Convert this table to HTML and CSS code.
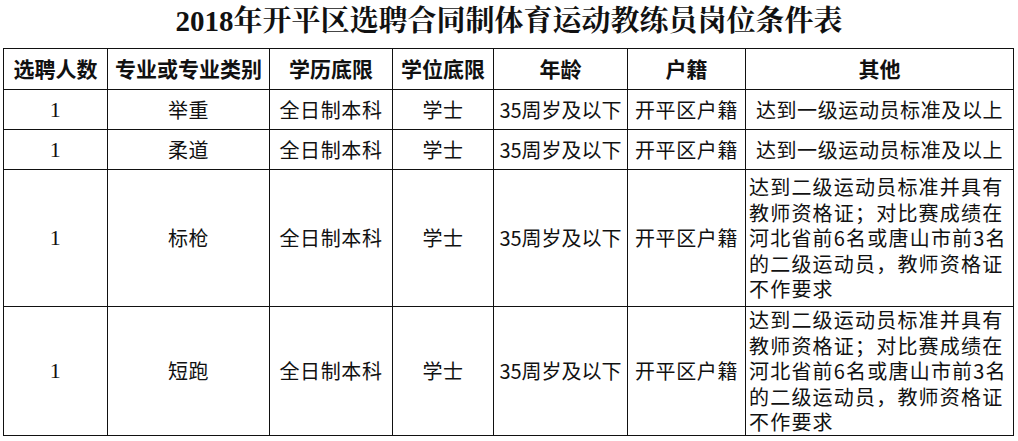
FILE: index.html
```html
<!DOCTYPE html>
<html lang="zh-CN">
<head>
<meta charset="utf-8">
<title>2018年开平区选聘合同制体育运动教练员岗位条件表</title>
<link rel="stylesheet" href="styles.css">
</head>
<body>
<h1 class="title">2018年开平区选聘合同制体育运动教练员岗位条件表</h1>
<table class="grid">
  <colgroup>
    <col class="c1"><col class="c2"><col class="c3"><col class="c4"><col class="c5"><col class="c6"><col class="c7">
  </colgroup>
  <thead>
    <tr class="r-head">
      <th>选聘人数</th><th>专业或专业类别</th><th>学历底限</th><th>学位底限</th><th>年龄</th><th>户籍</th><th>其他</th>
    </tr>
  </thead>
  <tbody>
    <tr class="r-short">
      <td class="num">1</td><td>举重</td><td>全日制本科</td><td>学士</td><td class="age">35周岁及以下</td><td>开平区户籍</td><td>达到一级运动员标准及以上</td>
    </tr>
    <tr class="r-short">
      <td class="num">1</td><td>柔道</td><td>全日制本科</td><td>学士</td><td class="age">35周岁及以下</td><td>开平区户籍</td><td>达到一级运动员标准及以上</td>
    </tr>
    <tr class="r-tall">
      <td class="num">1</td><td>标枪</td><td>全日制本科</td><td>学士</td><td class="age">35周岁及以下</td><td>开平区户籍</td>
      <td class="other">达到二级运动员标准并具有<br>教师资格证；对比赛成绩在<br>河北省前6名或唐山市前3名<br>的二级运动员，教师资格证<br>不作要求</td>
    </tr>
    <tr class="r-tall2">
      <td class="num">1</td><td>短跑</td><td>全日制本科</td><td>学士</td><td class="age">35周岁及以下</td><td>开平区户籍</td>
      <td class="other">达到二级运动员标准并具有<br>教师资格证；对比赛成绩在<br>河北省前6名或唐山市前3名<br>的二级运动员，教师资格证<br>不作要求</td>
    </tr>
  </tbody>
</table>
</body>
</html>
```

FILE: styles.css
```css
html, body {
  margin: 0;
  padding: 0;
  background: #ffffff;
}
body {
  color: #111;
  font-family: "Noto Sans CJK SC", "Noto Sans", sans-serif;
}
.title {
  margin: 0;
  height: 48px;
  line-height: 43px;
  text-align: center;
  font-family: "Liberation Serif", "Noto Serif CJK SC", "Noto Sans CJK SC", serif;
  font-size: 29px;
  font-weight: 700;
  letter-spacing: 0;
  color: #111;
}
.grid {
  margin-left: 3px;
  width: 1010px;
  table-layout: fixed;
  border-collapse: collapse;
  font-size: 20px;
}
.c1 { width: 104px; }
.c2 { width: 162px; }
.c3 { width: 123px; }
.c4 { width: 101px; }
.c5 { width: 134px; }
.c6 { width: 118px; }
.c7 { width: 268px; }
.grid th, .grid td {
  border: 1.5px solid #111;
  padding: 0 2px;
  text-align: center;
  vertical-align: middle;
  white-space: nowrap;
  overflow: hidden;
  line-height: 25.5px;
}
.grid th {
  font-weight: 700;
  font-size: 21px;
}
.grid td {
  font-weight: 400;
  letter-spacing: 0.6px;
}
.r-head { height: 41px; }
.r-short { height: 40px; }
.r-tall { height: 137px; }
.r-tall2 { height: 129px; }
.grid td.num {
  font-family: "Liberation Serif", serif;
  font-size: 22px;
}
.grid td.age {
  letter-spacing: 0;
  padding: 0;
}
.grid td.other {
  text-align: left;
  padding-left: 3px;
  letter-spacing: 1.2px;
}
```
